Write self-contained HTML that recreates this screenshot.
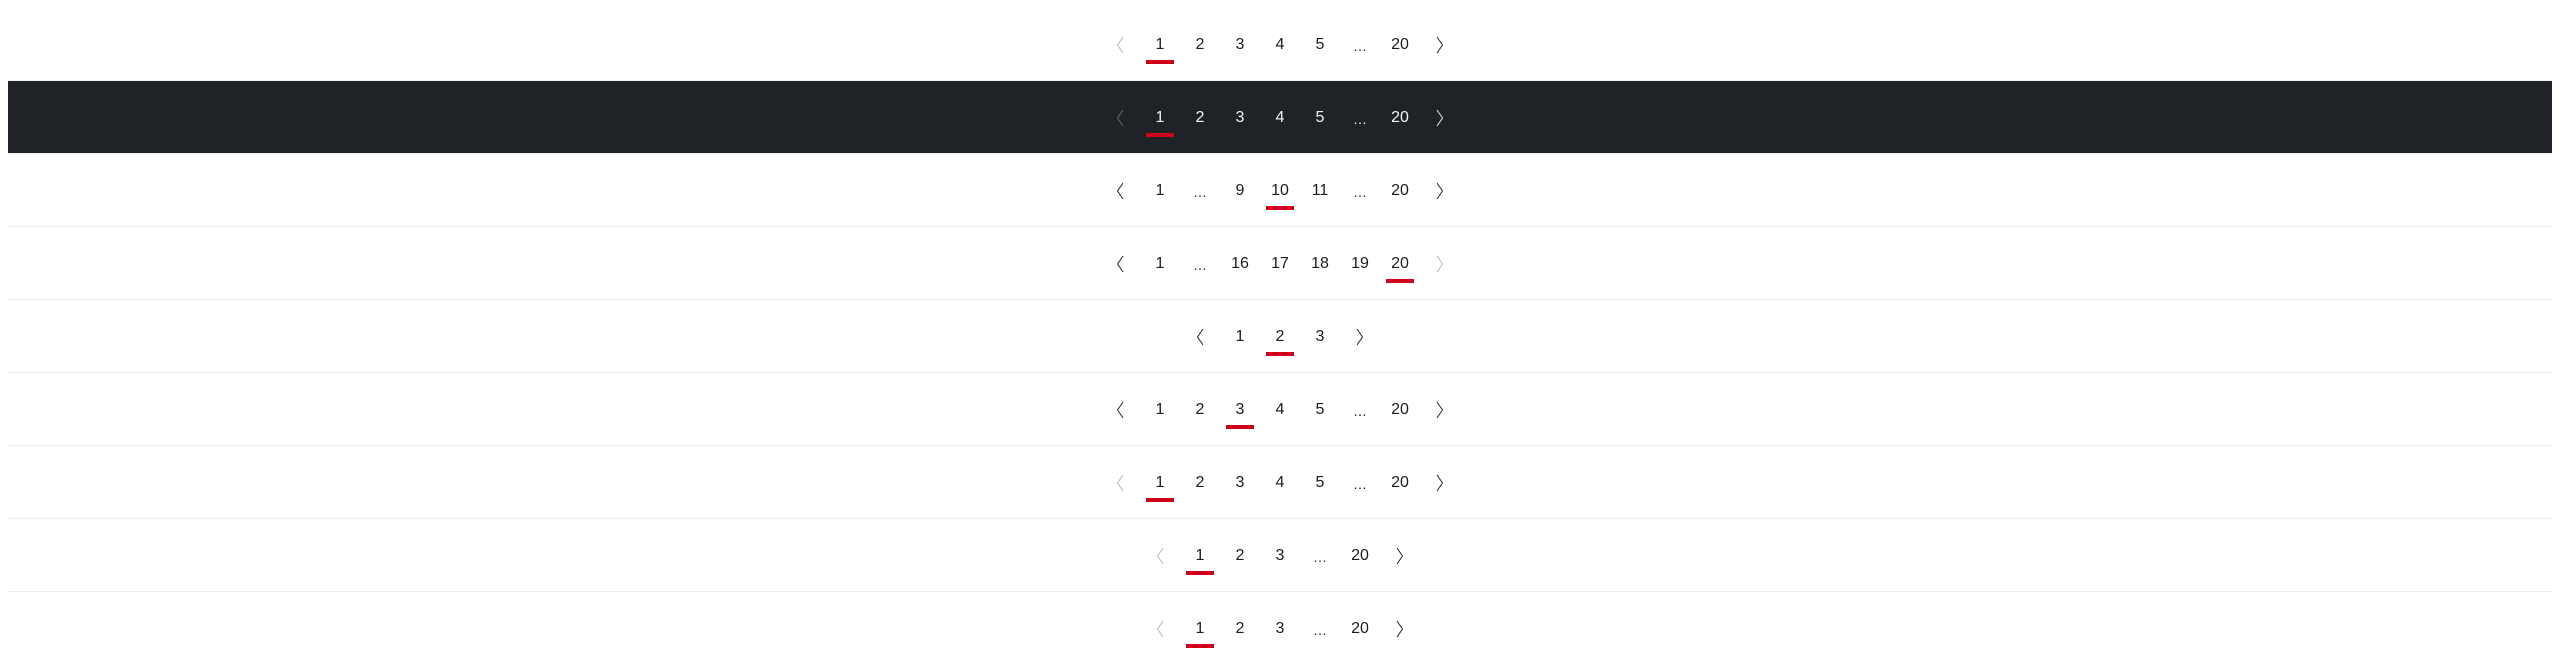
<!DOCTYPE html>
<html><head><meta charset="utf-8"><style>
html,body{margin:0;padding:0;background:#fff;width:2560px;height:672px;overflow:hidden}
.wrap{position:absolute;left:8px;top:8px;width:2544px}
.row{height:72px;border-bottom:1px solid #ececec;display:flex;justify-content:center;align-items:center}
.row.dark{background:#1f2226;border-bottom-color:#e6ebf0}
.row:last-child{border-bottom:none}
.it{width:40px;height:72px;position:relative;display:flex;justify-content:center;align-items:center;font-family:"Liberation Sans",sans-serif;font-size:16px;color:#1c1c1c;padding-top:2px;box-sizing:border-box}
.e{font-size:14px;padding-top:4px}
.dark .it{color:#f2f2f2}
.it.a::after{content:"";position:absolute;left:6px;width:28px;height:4px;top:52px;background:#d0021b}
.it svg{display:block}
.dis svg path{stroke:#b8b8b8}
.dark .dis svg path{stroke:#6a6d70}
.dark svg path{stroke:#eee}
</style></head><body><div class="wrap">
<div class="row"><div class="it dis"><svg width="10" height="18"><path d="M8 1 L2.5 9 L8 17" fill="none" stroke="#222" stroke-width="1"/></svg></div><div class="it a">1</div><div class="it">2</div><div class="it">3</div><div class="it">4</div><div class="it">5</div><div class="it e">…</div><div class="it">20</div><div class="it"><svg width="10" height="18"><path d="M2 1 L7.5 9 L2 17" fill="none" stroke="#222" stroke-width="1"/></svg></div></div>
<div class="row dark"><div class="it dis"><svg width="10" height="18"><path d="M8 1 L2.5 9 L8 17" fill="none" stroke="#222" stroke-width="1"/></svg></div><div class="it a">1</div><div class="it">2</div><div class="it">3</div><div class="it">4</div><div class="it">5</div><div class="it e">…</div><div class="it">20</div><div class="it"><svg width="10" height="18"><path d="M2 1 L7.5 9 L2 17" fill="none" stroke="#222" stroke-width="1"/></svg></div></div>
<div class="row"><div class="it"><svg width="10" height="18"><path d="M8 1 L2.5 9 L8 17" fill="none" stroke="#222" stroke-width="1"/></svg></div><div class="it">1</div><div class="it e">…</div><div class="it">9</div><div class="it a">10</div><div class="it">11</div><div class="it e">…</div><div class="it">20</div><div class="it"><svg width="10" height="18"><path d="M2 1 L7.5 9 L2 17" fill="none" stroke="#222" stroke-width="1"/></svg></div></div>
<div class="row"><div class="it"><svg width="10" height="18"><path d="M8 1 L2.5 9 L8 17" fill="none" stroke="#222" stroke-width="1"/></svg></div><div class="it">1</div><div class="it e">…</div><div class="it">16</div><div class="it">17</div><div class="it">18</div><div class="it">19</div><div class="it a">20</div><div class="it dis"><svg width="10" height="18"><path d="M2 1 L7.5 9 L2 17" fill="none" stroke="#222" stroke-width="1"/></svg></div></div>
<div class="row"><div class="it"><svg width="10" height="18"><path d="M8 1 L2.5 9 L8 17" fill="none" stroke="#222" stroke-width="1"/></svg></div><div class="it">1</div><div class="it a">2</div><div class="it">3</div><div class="it"><svg width="10" height="18"><path d="M2 1 L7.5 9 L2 17" fill="none" stroke="#222" stroke-width="1"/></svg></div></div>
<div class="row"><div class="it"><svg width="10" height="18"><path d="M8 1 L2.5 9 L8 17" fill="none" stroke="#222" stroke-width="1"/></svg></div><div class="it">1</div><div class="it">2</div><div class="it a">3</div><div class="it">4</div><div class="it">5</div><div class="it e">…</div><div class="it">20</div><div class="it"><svg width="10" height="18"><path d="M2 1 L7.5 9 L2 17" fill="none" stroke="#222" stroke-width="1"/></svg></div></div>
<div class="row"><div class="it dis"><svg width="10" height="18"><path d="M8 1 L2.5 9 L8 17" fill="none" stroke="#222" stroke-width="1"/></svg></div><div class="it a">1</div><div class="it">2</div><div class="it">3</div><div class="it">4</div><div class="it">5</div><div class="it e">…</div><div class="it">20</div><div class="it"><svg width="10" height="18"><path d="M2 1 L7.5 9 L2 17" fill="none" stroke="#222" stroke-width="1"/></svg></div></div>
<div class="row"><div class="it dis"><svg width="10" height="18"><path d="M8 1 L2.5 9 L8 17" fill="none" stroke="#222" stroke-width="1"/></svg></div><div class="it a">1</div><div class="it">2</div><div class="it">3</div><div class="it e">…</div><div class="it">20</div><div class="it"><svg width="10" height="18"><path d="M2 1 L7.5 9 L2 17" fill="none" stroke="#222" stroke-width="1"/></svg></div></div>
<div class="row"><div class="it dis"><svg width="10" height="18"><path d="M8 1 L2.5 9 L8 17" fill="none" stroke="#222" stroke-width="1"/></svg></div><div class="it a">1</div><div class="it">2</div><div class="it">3</div><div class="it e">…</div><div class="it">20</div><div class="it"><svg width="10" height="18"><path d="M2 1 L7.5 9 L2 17" fill="none" stroke="#222" stroke-width="1"/></svg></div></div>
</div></body></html>
